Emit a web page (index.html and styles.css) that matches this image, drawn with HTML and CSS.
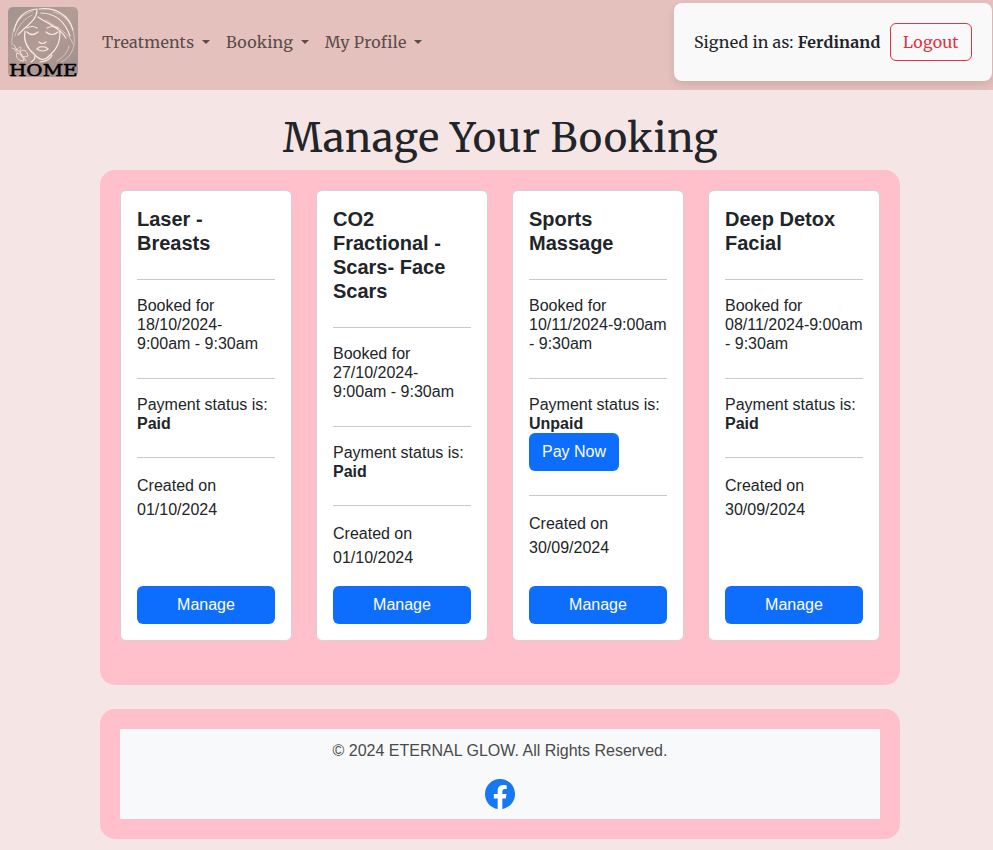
FILE: index.html
```
<!DOCTYPE html>
<html lang="en">
<head>
<meta charset="utf-8">
<title>Manage Your Booking</title>
<link rel="stylesheet" href="styles.css">
</head>
<body>
<div class="page">
  <nav class="navbar">
    <a class="brand">
      <svg width="70" height="70" viewBox="0 0 70 70" fill="none" stroke-linecap="round">
        <defs>
          <linearGradient id="bg" x1="0" y1="0" x2="1" y2="1"><stop offset="0" stop-color="#a09490"/><stop offset=".5" stop-color="#b49b96"/><stop offset="1" stop-color="#9c8f8d"/></linearGradient>
        </defs>
        <rect width="70" height="70" rx="5" fill="url(#bg)"/>
        <g stroke="#e8c4bb" stroke-width=".9">
          <path d="M25 4C8 9 3 25 4 38M45 5C61 8 68 24 66 38C64 48 58 53 53 55M38 13C50 22 61 25 65 37M61 39C59 48 53 51 49 54M24 8C14 13 9 21 7 29"/>
        </g>
        <g stroke="#fbeadf" stroke-width="1.2">
          <path d="M29 2C15 3 8 13 6 24M29 3C29 14 16 20 10 28M31 2C46 0 61 7 65 23M33 6C47 6 57 15 62 29M30 10C42 18 53 22 58 31"/>
          <path d="M17 24C15 35 20 42 26 47C32 54 37 54 42 48C49 42 52 36 52 24"/>
          <path d="M19 25Q24 30 30 25M38 25Q44 30 50 25M19 21Q24 18 29 21M39 21Q45 18 50 21"/>
          <path d="M31 35Q34.500 38 38 35"/>
          <path d="M29 42Q32 39 34.500 40Q37 39 40 42Q35 46 29 42Z"/>
          <path d="M27 49Q27 53 23 55M44 48Q42 54 32 55"/>
        </g>
        <g stroke="#f7e1d7" stroke-width=".9">
          <path d="M6 38L9 43L4 41M9 43C12 38 14 40 12 44L7 44M12 45C16 41 19 44 20 49C16 51 12 49 12 45L18 54M9 46C7 50 10 54 16 54C15 50 13 47 9 46Z"/>
        </g>
        <text class="brand-text" x="1" y="68.500" textLength="68.500" lengthAdjust="spacingAndGlyphs">HOME</text>
      </svg>
    </a>
    <div class="menu">
      <a class="menu-item">Treatments<i class="caret"></i></a>
      <a class="menu-item">Booking<i class="caret"></i></a>
      <a class="menu-item">My Profile<i class="caret"></i></a>
    </div>
    <div class="account">
      <span>Signed in as: <b>Ferdinand</b></span>
      <a class="logout">Logout</a>
    </div>
  </nav>

  <h1 class="title">Manage Your Booking</h1>

  <main class="panel bookings">
    <article class="card">
      <h5>Laser - Breasts</h5><hr>
      <h6>Booked for 18/10/2024-<br>9:00am - 9:30am</h6><hr>
      <h6>Payment status is: <b>Paid</b></h6><hr>
      <p>Created on 01/10/2024</p>
      <a class="btn manage">Manage</a>
    </article>
    <article class="card">
      <h5>CO2 Fractional - Scars- Face Scars</h5><hr>
      <h6>Booked for 27/10/2024-<br>9:00am - 9:30am</h6><hr>
      <h6>Payment status is: <b>Paid</b></h6><hr>
      <p>Created on 01/10/2024</p>
      <a class="btn manage">Manage</a>
    </article>
    <article class="card">
      <h5>Sports Massage</h5><hr>
      <h6>Booked for<br><span class="nowrap">10/11/2024-9:00am</span><br>- 9:30am</h6><hr>
      <h6>Payment status is: <b>Unpaid</b><br><a class="btn">Pay Now</a></h6><hr>
      <p>Created on 30/09/2024</p>
      <a class="btn manage">Manage</a>
    </article>
    <article class="card">
      <h5>Deep Detox Facial</h5><hr>
      <h6>Booked for<br><span class="nowrap">08/11/2024-9:00am</span><br>- 9:30am</h6><hr>
      <h6>Payment status is: <b>Paid</b></h6><hr>
      <p>Created on 30/09/2024</p>
      <a class="btn manage">Manage</a>
    </article>
  </main>

  <footer class="panel footer">
    <div class="footer-inner">
      <p>© 2024 ETERNAL GLOW. All Rights Reserved.</p>
      <svg width="30" height="30" viewBox="0 0 16 16"><circle cx="8" cy="8" r="7.6" fill="#fff"/><path fill="#1877f2" d="M16 8.049c0-4.446-3.582-8.05-8-8.05C3.58 0-.002 3.603-.002 8.05c0 4.017 2.926 7.347 6.75 7.951v-5.625h-2.03V8.05H6.75V6.275c0-2.017 1.195-3.131 3.022-3.131.876 0 1.791.157 1.791.157v1.98h-1.009c-.993 0-1.303.621-1.303 1.258v1.51h2.218l-.354 2.326H9.25V16c3.824-.604 6.75-3.934 6.75-7.951"/></svg>
    </div>
  </footer>
</div>
</body>
</html>
```
FILE: styles.css
```
* { box-sizing: border-box; }
body {
  margin: 0;
  background: #f5e6e5;
  color: #212529;
  font: 16px/24px "Liberation Sans", Arial, sans-serif;
  overflow: hidden;
}
.page { width: 1000px; height: 850px; }
.navbar {
  display: flex;
  align-items: center;
  height: 90px;
  padding: 0 8px 6px;
  background: #e5c1bd;
  letter-spacing: .25px;
}
.navbar, .title { font-family: Merriweather, "DejaVu Serif Condensed", "DejaVu Serif", serif; }
.brand, .brand svg { display: block; overflow: visible; }
.brand-text { font: 16.5px "DejaVu Serif", serif; letter-spacing: 0; fill: #000; stroke: #000; stroke-width: .5px; }
.menu { display: flex; margin-left: 24px; gap: 16px; }
.menu-item { display: flex; align-items: center; color: #5b4d4c; white-space: nowrap; }
.caret {
  margin-left: 7.6px;
  border: 4.5px solid transparent;
  border-top-color: currentColor;
  border-bottom: 0;
}
.account {
  display: flex;
  align-items: center;
  justify-content: space-between;
  width: 318px;
  height: 78px;
  margin-left: auto;
  padding: 0 20px;
  background: #f9f9f9;
  border-radius: 8px;
  box-shadow: 0 4px 8px rgba(0, 0, 0, .1);
  letter-spacing: .22px;
  white-space: nowrap;
}
.logout {
  width: 82px;
  height: 38px;
  padding: 6px 12px;
  border: 1px solid #dc3545;
  border-radius: 6px;
  color: #dc3545;
}
.title {
  height: 56px;
  margin: 24px 0 0;
  font-size: 40px;
  font-weight: normal;
  line-height: 48px;
  letter-spacing: .55px;
  text-indent: 1px;
  text-align: center;
}
.panel {
  width: 800px;
  margin: 0 auto;
  padding: 20px;
  background: #ffbfcb;
  border-radius: 15px;
}
.bookings {
  display: grid;
  grid-template-columns: repeat(4, 172px);
  grid-template-rows: 451px;
  gap: 24px;
  height: 515px;
}
.card {
  display: flex;
  flex-direction: column;
  padding: 16px;
  background: #fff;
  border: 1px solid #d5d0d1;
  border-radius: 6px;
}
h5 { margin: 0 0 8px; font-size: 20px; line-height: 24px; }
h6 { margin: 0 0 8px; font-size: 16px; line-height: 19.2px; font-weight: normal; }
hr { width: 100%; margin: 16px 0; border: 0; border-top: 1px solid #c8c9ca; }
p { margin: 0 0 16px; }
.nowrap { white-space: nowrap; }
.btn {
  display: inline-block;
  height: 38px;
  padding: 7px 13px;
  background: #0d6efd;
  border-radius: 6px;
  color: #fff;
  line-height: 24px;
  text-align: center;
  vertical-align: top;
}
.manage { margin-top: auto; }
.footer { height: 130px; margin-top: 24px; }
.footer-inner {
  display: flex;
  flex-direction: column;
  align-items: center;
  height: 90px;
  padding-top: 10px;
  background: #f8f9fa;
  color: #4a4a4a;
}
```
